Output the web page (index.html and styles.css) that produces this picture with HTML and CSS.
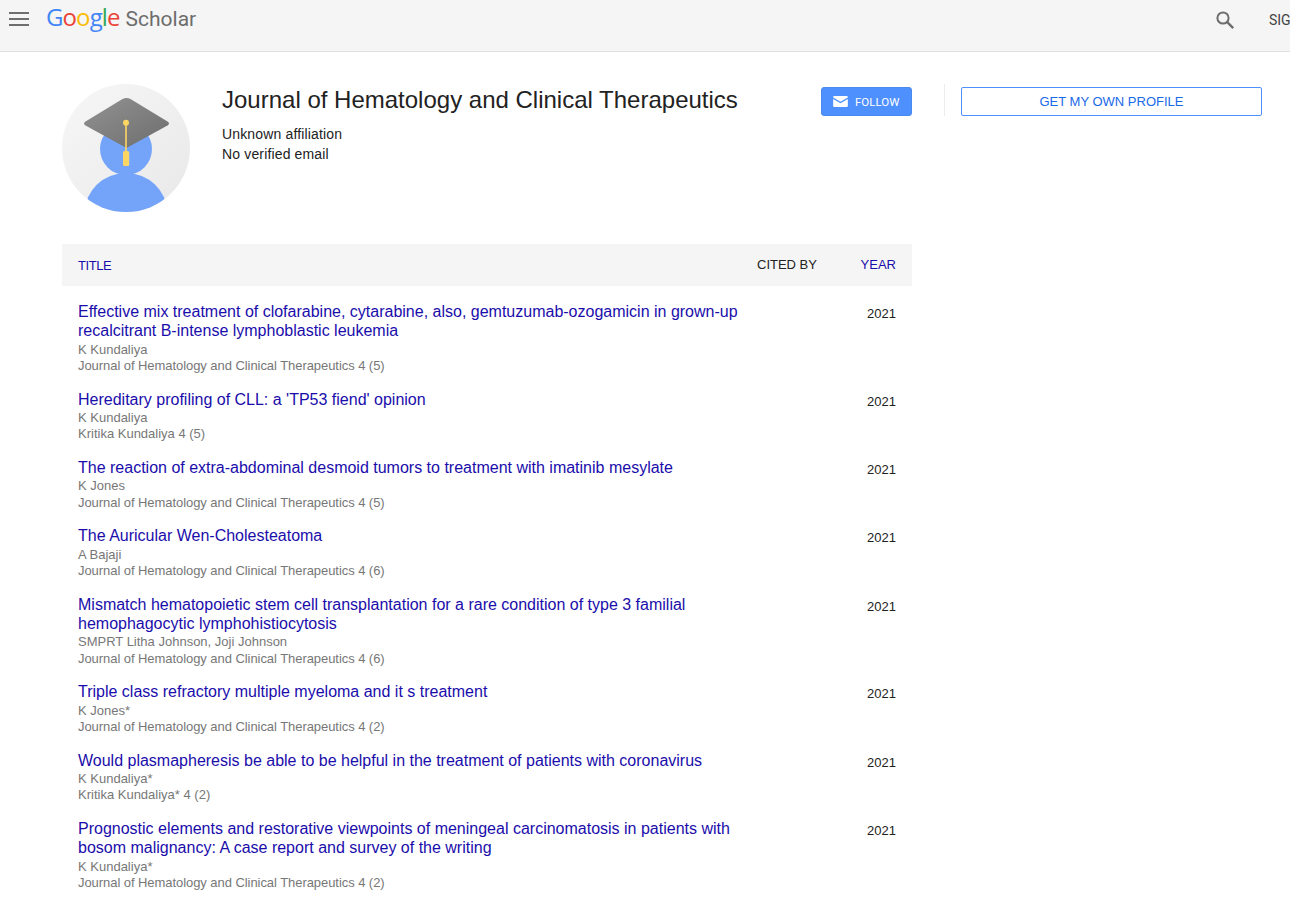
FILE: index.html
```html
<!DOCTYPE html>
<html lang="en">
<head>
<meta charset="utf-8">
<title>Journal of Hematology and Clinical Therapeutics - Google Scholar</title>
<link rel="stylesheet" href="styles.css">
</head>
<body>
<header class="topbar">
  <svg class="menu" width="20" height="14" viewBox="0 0 20 14"><path d="M0 1h20M0 7h20M0 13h20" stroke="#6e6e6e" stroke-width="2"/></svg>
  <div class="logo"><span class="g-b">G</span><span class="g-r">o</span><span class="g-y">o</span><span class="g-b">g</span><span class="g-g">l</span><span class="g-r">e</span><span class="scholar">Scholar</span></div>
  <div class="topright">
    <svg class="search" width="20" height="20" viewBox="0 0 20 20"><circle cx="8" cy="8" r="5.6" fill="none" stroke="#6e6e6e" stroke-width="2"/><path d="M12.2 12.2L18.2 18.2" stroke="#6e6e6e" stroke-width="2.4"/></svg>
    <span class="signin">SIGN IN</span>
  </div>
</header>
<div class="page">
  <main class="main">
    <section class="profile">
      <svg class="avatar" width="128" height="128" viewBox="0 0 128 128">
        <defs>
          <linearGradient id="bg" x1="0" y1="0" x2="1" y2="1"><stop offset="0" stop-color="#f7f7f7"/><stop offset="1" stop-color="#e8e8e8"/></linearGradient>
          <linearGradient id="cap" x1="0" y1="0" x2="1" y2="1"><stop offset="0" stop-color="#929292"/><stop offset="1" stop-color="#6d6d6d"/></linearGradient>
          <clipPath id="circ"><circle cx="64" cy="64" r="64"/></clipPath>
        </defs>
        <circle cx="64" cy="64" r="64" fill="url(#bg)"/>
        <g clip-path="url(#circ)">
          <circle cx="64" cy="65" r="26" fill="#74a4fa"/>
          <ellipse cx="64" cy="128" rx="41" ry="39" fill="#74a4fa"/>
        </g>
        <path d="M60 15Q64 13 68 15L105 37.500Q108 39.500 105 41.500L64 64L23 41.500Q20 39.500 23 37.500Z" transform="translate(0.500 0)" fill="url(#cap)"/>
        <path d="M63.200 40h1.600v28h-1.600z" fill="#fdd663"/>
        <circle cx="64" cy="38.700" r="3" fill="#fdd663"/>
        <rect x="61" y="67" width="6.200" height="15" rx="1.500" fill="#fdd663"/>
      </svg>
      <div class="info">
        <h1 class="name">Journal of Hematology and Clinical Therapeutics</h1>
        <div class="meta">Unknown affiliation</div>
        <div class="meta">No verified email</div>
      </div>
      <button class="follow">
        <svg width="15" height="11" viewBox="0 0 16 12"><path d="M1.200 0h13.600q1.200 0 1.200 1.200v.3L8 6.300 0 1.500v-.3Q0 0 1.200 0zM0 3.200l8 4.800 8-4.800v7.600q0 1.200-1.200 1.200H1.200Q0 12 0 10.800z" fill="#fff"/></svg>
        <span>FOLLOW</span>
      </button>
    </section>
    <div class="thead">
      <span class="th-title">TITLE</span>
      <span class="th-cited">CITED BY</span>
      <span class="th-year">YEAR</span>
    </div>
    <div class="rows">
      <article class="row"><div class="cell"><a class="title">Effective mix treatment of clofarabine, cytarabine, also, gemtuzumab-ozogamicin in grown-up recalcitrant B-intense lymphoblastic leukemia</a><div class="gray">K Kundaliya</div><div class="gray journal">Journal of Hematology and Clinical Therapeutics 4 (5)</div></div><div class="yr">2021</div></article>
      <article class="row"><div class="cell"><a class="title">Hereditary profiling of CLL: a 'TP53 fiend' opinion</a><div class="gray">K Kundaliya</div><div class="gray">Kritika Kundaliya 4 (5)</div></div><div class="yr">2021</div></article>
      <article class="row"><div class="cell"><a class="title">The reaction of extra-abdominal desmoid tumors to treatment with imatinib mesylate</a><div class="gray">K Jones</div><div class="gray journal">Journal of Hematology and Clinical Therapeutics 4 (5)</div></div><div class="yr">2021</div></article>
      <article class="row"><div class="cell"><a class="title">The Auricular Wen-Cholesteatoma</a><div class="gray">A Bajaji</div><div class="gray journal">Journal of Hematology and Clinical Therapeutics 4 (6)</div></div><div class="yr">2021</div></article>
      <article class="row"><div class="cell"><a class="title">Mismatch hematopoietic stem cell transplantation for a rare condition of type 3 familial hemophagocytic lymphohistiocytosis</a><div class="gray">SMPRT Litha Johnson, Joji Johnson</div><div class="gray journal">Journal of Hematology and Clinical Therapeutics 4 (6)</div></div><div class="yr">2021</div></article>
      <article class="row"><div class="cell"><a class="title">Triple class refractory multiple myeloma and it s treatment</a><div class="gray">K Jones*</div><div class="gray journal">Journal of Hematology and Clinical Therapeutics 4 (2)</div></div><div class="yr">2021</div></article>
      <article class="row"><div class="cell"><a class="title">Would plasmapheresis be able to be helpful in the treatment of patients with coronavirus</a><div class="gray">K Kundaliya*</div><div class="gray">Kritika Kundaliya* 4 (2)</div></div><div class="yr">2021</div></article>
      <article class="row"><div class="cell"><a class="title">Prognostic elements and restorative viewpoints of meningeal carcinomatosis in patients with bosom malignancy: A case report and survey of the writing</a><div class="gray">K Kundaliya*</div><div class="gray journal">Journal of Hematology and Clinical Therapeutics 4 (2)</div></div><div class="yr">2021</div></article>
    </div>
  </main>
  <aside class="side">
    <button class="own">GET MY OWN PROFILE</button>
  </aside>
</div>
</body>
</html>
```
FILE: styles.css
```css
* { box-sizing: border-box; }
html, body { margin: 0; padding: 0; overflow: hidden; height: 902px; }
body { background: #fff; font-family: "Liberation Sans", Arial, sans-serif; color: #222; }

.topbar { height: 52px; background: #f5f5f5; border-bottom: 1px solid #e0e0e0; display: flex; align-items: flex-start; padding-left: 9px; overflow: hidden; }
.menu { margin-top: 12px; flex: none; }
.logo { margin-left: 17px; margin-top: 0; font-family: "Open Sans", sans-serif; font-size: 24px; line-height: 34px; letter-spacing: -0.9px; white-space: nowrap; }
.g-b { color: #4285f4; } .g-r { color: #ea4335; } .g-y { color: #fbbc05; } .g-g { color: #34a853; }
.scholar { font-family: Roboto, sans-serif; color: #6d6d6d; font-size: 21px; letter-spacing: 0; margin-left: 6px; }
.topright { margin-left: auto; display: flex; align-items: flex-start; width: 75px; flex: none; overflow: hidden; white-space: nowrap; }
.search { flex: none; margin-top: 10px; }
.signin { margin-left: 34px; margin-top: 12px; font-family: Roboto, sans-serif; font-size: 14px; line-height: 16px; color: #444; }

.page { display: flex; align-items: flex-start; padding: 32px 0 0 62px; }
.main { width: 850px; flex: none; }
.side { width: 350px; flex: none; margin-left: 32px; padding: 3px 0 0 17px; position: relative; }
.side::before { content: ""; position: absolute; left: 0; top: 0; width: 1px; height: 32px; background: #ececec; }
.own { display: block; width: 301px; height: 29px; background: #fff; border: 1px solid #4d90fe; border-radius: 2px; color: #1a6ae8; font-family: "Liberation Sans", Arial, sans-serif; font-size: 13px; line-height: 27px; padding: 0; }

.profile { display: flex; align-items: flex-start; height: 160px; }
.avatar { flex: none; }
.info { margin-left: 32px; flex: 1; min-width: 0; }
.name { margin: 0 0 8px; font-size: 24px; line-height: 32px; font-weight: 400; color: #222; }
.meta { font-size: 14px; line-height: 20px; letter-spacing: 0.15px; color: #222; }
.follow { flex: none; width: 91px; height: 29px; margin-top: 3px; background: #4d90fe; border: 1px solid #4a8af0; border-radius: 3px; display: flex; align-items: center; padding: 0 0 0 11px; color: #fff; font-family: Roboto, sans-serif; font-size: 11.5px; }
.follow span { margin-left: 7px; }

.thead { height: 42px; background: #f5f5f5; display: flex; align-items: center; padding: 0 16px; font-size: 13px; }
.th-title { color: #1a0dab; flex: 1; letter-spacing: -0.4px; padding-top: 1px; }
.th-cited { color: #222; width: 59px; white-space: nowrap; margin-top: -2px; }
.th-year { color: #1a0dab; width: 80px; text-align: right; margin-top: -2px; }

.rows { padding-top: 7.85px; }
.row { display: flex; padding: 8px 16px 7.2px 16px; align-items: flex-start; }
.cell { width: 672px; flex: none; }
.title { display: block; margin-bottom: 0.8px; font-size: 16px; line-height: 19.5px; color: #1a0dab; }
.gray { font-size: 13px; line-height: 16.4px; color: #777; }
.journal { letter-spacing: -0.06px; }
.yr { margin-left: auto; margin-top: 2px; font-size: 13px; line-height: 20px; color: #222; }
```
